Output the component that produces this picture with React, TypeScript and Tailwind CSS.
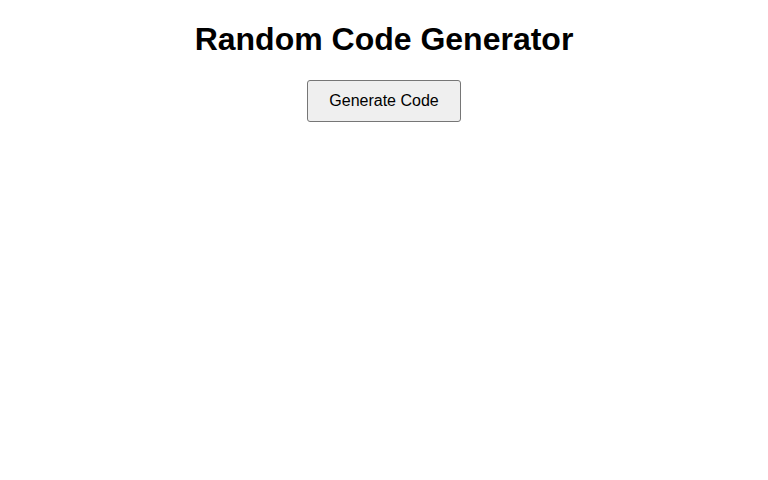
import React from "react";

export default function App() {
  return (
    <div className="min-h-[480px] bg-white text-center text-black" style={{ fontFamily: '"Liberation Sans", Arial, sans-serif' }}>
      <div className="flow-root">
        <h1 className="mt-[21.44px] mb-[21.44px] text-[32px] font-bold leading-[37px]">Random Code Generator</h1>
        <button
          type="button"
          className="h-[42px] w-[154px] rounded-[3px] border border-[#767676] bg-[#efefef] text-[16px] leading-[20px] text-black"
        >
          Generate Code
        </button>
      </div>
    </div>
  );
}
